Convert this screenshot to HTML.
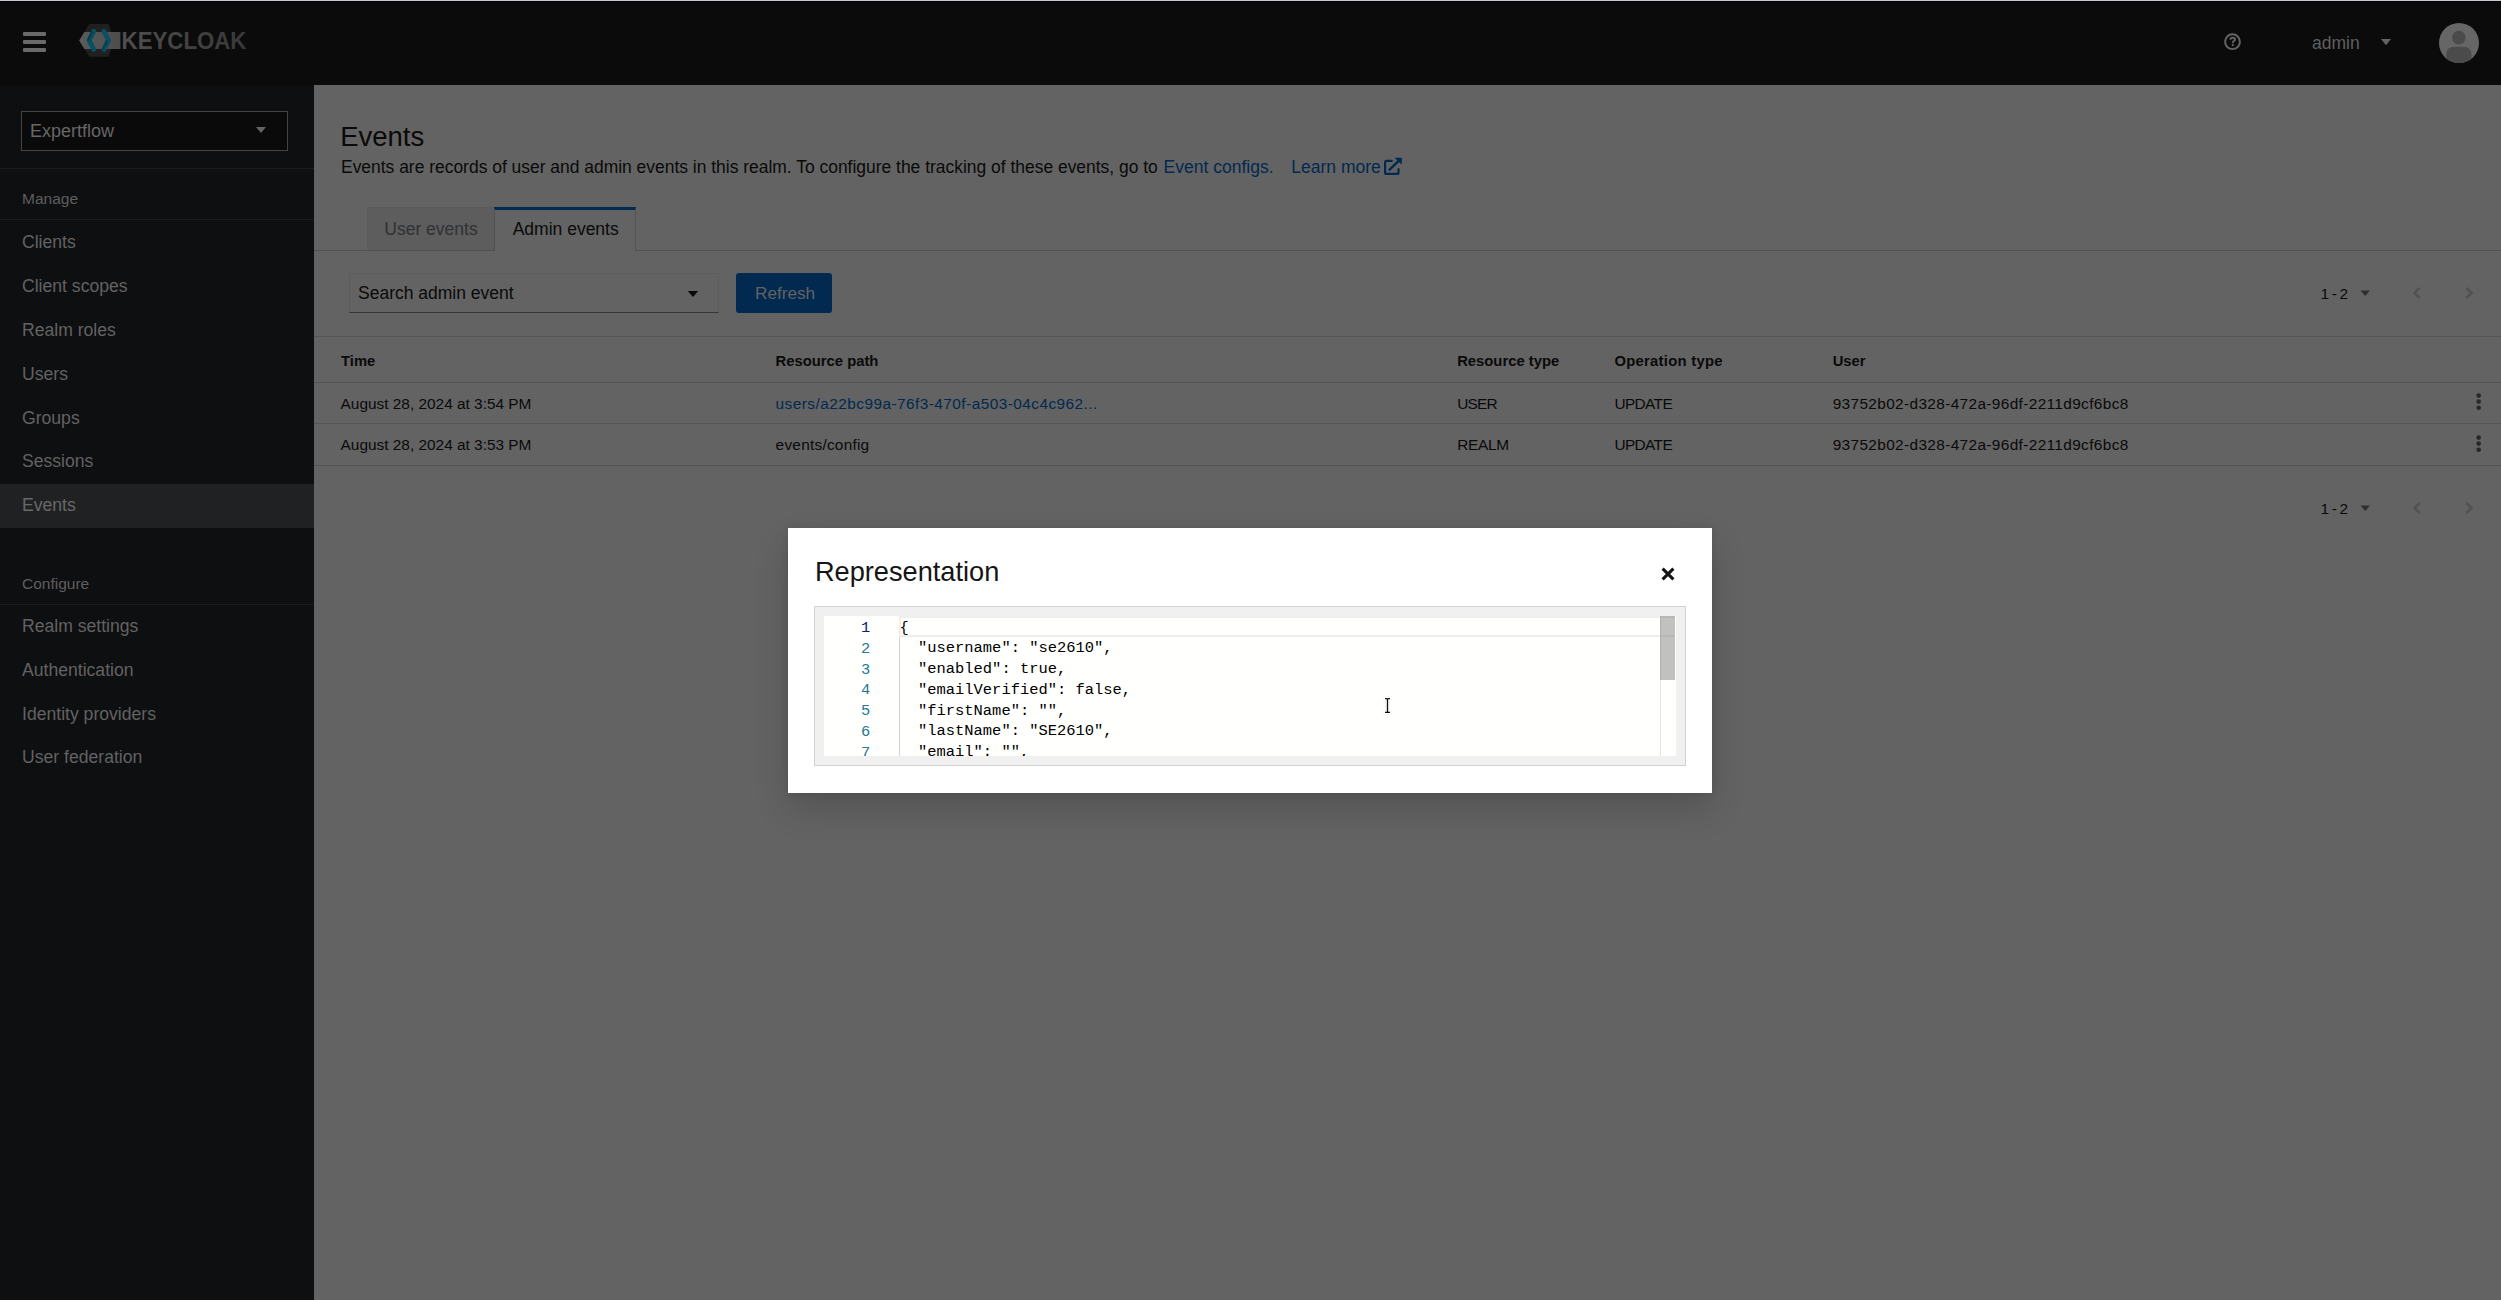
<!DOCTYPE html>
<html><head><meta charset="utf-8">
<style>
*{box-sizing:border-box;margin:0;padding:0}
html,body{width:2501px;height:1300px;overflow:hidden;background:#636363;font-family:"Liberation Sans",sans-serif;color:#0a0a0a}
.abs{position:absolute}
.t{position:absolute;white-space:nowrap;line-height:1}
#topline{left:0;top:0;width:2501px;height:1px;background:#c5cad6}
#topline2{left:0;top:1px;width:2501px;height:1px;background:#000}
#header{left:0;top:2px;width:2501px;height:83px;background:#0b0b0b}
#sidebar{left:0;top:85px;width:314px;height:1215px;background:#0e0f11}
.ham{left:23px;width:23px;height:4px;background:#6a6a6a;border-radius:1px}
.nav{left:22px;font-size:17.6px;color:#626262}
.navsec{left:22px;font-size:15.5px;color:#5e5e5e}
.sdiv{left:0;width:314px;height:1px;background:#1b1c1e}
.th{font-weight:bold;font-size:14.8px;color:#0a0a0a}
.td{font-size:15.4px;color:#0a0a0a}
.rowline{left:314px;width:2187px;height:1px;background:#555}
</style></head>
<body>
<div id="topline" class="abs"></div>
<div id="topline2" class="abs"></div>
<div id="header" class="abs"></div>
<div id="sidebar" class="abs"></div>
<!-- header content -->
<div class="abs ham" style="top:32px"></div>
<div class="abs ham" style="top:39.5px"></div>
<div class="abs ham" style="top:47.5px"></div>
<svg class="abs" style="left:0;top:0" width="260" height="85" viewBox="0 0 260 85">
  <defs>
    <linearGradient id="bg1" x1="0" x2="1" y1="0" y2="0"><stop offset="0" stop-color="#5b5b5b"/><stop offset="1" stop-color="#4d4d4d"/></linearGradient>
    <linearGradient id="kg" x1="0" x2="1" y1="0" y2="0"><stop offset="0" stop-color="#4f4f4f"/><stop offset="1" stop-color="#383838"/></linearGradient>
  </defs>
  <polygon points="89.4,24 108.7,24 113.6,40.4 108.7,56.8 89.4,56.8 79.4,40.4" fill="#202020"/>
  <polygon points="84.3,31.9 120.4,31.9 120.4,48.9 84.3,48.9 79.2,40.4" fill="url(#bg1)"/>
  <polyline points="93.8,31.4 89.2,40.4 93.8,49.4" fill="none" stroke="#0a5064" stroke-width="4.8" stroke-linecap="round" stroke-linejoin="miter"/>
  <polyline points="104,31.4 108.6,40.4 104,49.4" fill="none" stroke="#0a5064" stroke-width="4.8" stroke-linecap="round" stroke-linejoin="miter"/>
  <line x1="92.45" y1="31.2" x2="87.85" y2="40.4" stroke="#053f4d" stroke-width="2.3"/>
  <line x1="102.65" y1="49.6" x2="107.25" y2="40.4" stroke="#053f4d" stroke-width="2.3"/>
  <text x="121.6" y="49.2" font-family="Liberation Sans" font-weight="bold" font-size="24.7" textLength="124.8" lengthAdjust="spacingAndGlyphs" fill="url(#kg)">KEYCLOAK</text>
</svg>
<svg class="abs" style="left:2222px;top:32px" width="22" height="22" viewBox="0 0 22 22">
  <circle cx="10.5" cy="9.7" r="7.4" fill="none" stroke="#636363" stroke-width="2"/>
  <path d="M8.4,7.7 C8.4,6.4 9.4,5.8 10.7,5.8 C12.1,5.8 13,6.6 13,7.6 C13,8.9 11.1,9.2 10.8,10.5 L10.8,11.2" fill="none" stroke="#636363" stroke-width="1.9"/>
  <circle cx="10.8" cy="13.2" r="1.15" fill="#636363"/>
</svg>
<div class="t" style="left:2312px;top:35px;font-size:17.5px;color:#5f5f5f">admin</div>
<svg class="abs" style="left:2380px;top:38px" width="12" height="8" viewBox="0 0 12 8"><polygon points="1,1 11,1 6,7.2" fill="#636363"/></svg>
<svg class="abs" style="left:2439px;top:23.4px" width="40" height="40" viewBox="0 0 40 40">
  <defs><clipPath id="avc"><circle cx="20" cy="20" r="20"/></clipPath></defs>
  <circle cx="20" cy="20" r="20" fill="#666"/>
  <g clip-path="url(#avc)">
    <circle cx="19.8" cy="14.6" r="6.8" fill="#4b4b4b"/>
    <path d="M7.2,40 V32 C7.2,27 9.5,23.8 16,23.8 H23.6 C30,23.8 32.4,27 32.4,32 V40 Z" fill="#4b4b4b"/>
  </g>
</svg>
<!-- sidebar content -->
<div class="abs" style="left:21px;top:111px;width:267px;height:40px;background:#0a0a0a;border:1px solid #444"></div>
<div class="t" style="left:30px;top:122px;font-size:18px;color:#676767">Expertflow</div>
<svg class="abs" style="left:255px;top:126px" width="12" height="8" viewBox="0 0 12 8"><polygon points="1,1 11,1 6,7" fill="#636363"/></svg>
<div class="abs sdiv" style="top:168px"></div>
<div class="t navsec" style="top:190.5px">Manage</div>
<div class="abs sdiv" style="top:219px"></div>
<div class="t nav" style="top:234.3px">Clients</div>
<div class="t nav" style="top:278.2px">Client scopes</div>
<div class="t nav" style="top:322.1px">Realm roles</div>
<div class="t nav" style="top:366px">Users</div>
<div class="t nav" style="top:409.9px">Groups</div>
<div class="t nav" style="top:453.3px">Sessions</div>
<div class="abs" style="left:0;top:484px;width:314px;height:43.6px;background:#202123"></div>
<div class="t nav" style="top:497.4px;color:#686868">Events</div>
<div class="t navsec" style="top:575.8px">Configure</div>
<div class="abs sdiv" style="top:604px"></div>
<div class="t nav" style="top:618.4px">Realm settings</div>
<div class="t nav" style="top:662.4px">Authentication</div>
<div class="t nav" style="top:705.6px">Identity providers</div>
<div class="t nav" style="top:749.2px">User federation</div>
<!-- main content -->
<div class="t" style="left:340.2px;top:123.1px;font-size:27.5px;color:#0a0a0a">Events</div>
<div class="t" style="left:341px;top:158.5px;font-size:17.45px;color:#0a0a0a">Events are records of user and admin events in this realm. To configure the tracking of these events, go to</div>
<div class="t" style="left:1163.6px;top:158.5px;font-size:17.5px;color:#022950">Event configs.</div>
<div class="t" style="left:1291.3px;top:158.5px;font-size:17.5px;color:#022950">Learn more</div>
<svg class="abs" style="left:1383px;top:157px" width="20" height="19" viewBox="0 0 20 19">
  <path d="M8.7,3.95 H3.6 Q2.1,3.95 2.1,5.4 V15.4 Q2.1,16.9 3.6,16.9 H14 Q15.5,16.9 15.5,15.4 V12" fill="none" stroke="#022950" stroke-width="2.2" stroke-linecap="round"/>
  <path d="M6.6,12.6 L15.6,3.9" fill="none" stroke="#022950" stroke-width="2.5" stroke-linecap="round"/>
  <polygon points="12.2,1.1 18.6,1.1 18.4,7" fill="#022950" stroke="#022950" stroke-width="0.6" stroke-linejoin="round"/>
</svg>
<!-- tabs -->
<div class="abs" style="left:314px;top:250px;width:2187px;height:1px;background:#525252"></div>
<div class="abs" style="left:366.7px;top:206.8px;width:127.7px;height:43.4px;background:#5d5d5d;border-top:1px solid #5b5b5b"></div>
<div class="abs" style="left:494.4px;top:206.8px;width:141.3px;height:44.2px;background:#636363;border-left:1px solid #525252;border-right:1px solid #525252;border-top:3px solid #022950"></div>
<div class="t" style="left:384.3px;top:221.2px;font-size:17.5px;color:#303234">User events</div>
<div class="t" style="left:512.7px;top:221.2px;font-size:17.5px;color:#0a0a0a">Admin events</div>
<!-- toolbar -->
<div class="abs" style="left:349px;top:273px;width:369.6px;height:40px;border:1px solid #5d5d5d;border-bottom:1px solid #363637"></div>
<div class="t" style="left:358px;top:285.2px;font-size:17.5px;color:#0a0a0a">Search admin event</div>
<svg class="abs" style="left:687px;top:289.5px" width="13" height="8" viewBox="0 0 13 8"><polygon points="0.8,1 11.2,1 6,7" fill="#0a0a0a"/></svg>
<div class="abs" style="left:736.2px;top:273px;width:95.6px;height:40px;background:#022950;border-radius:3px"></div>
<div class="t" style="left:755px;top:285.4px;font-size:17.2px;color:#636363">Refresh</div>
<div class="t" style="left:2320.5px;top:286px;font-size:15.4px;color:#0a0a0a;letter-spacing:-0.8px">1 - 2</div>
<svg class="abs" style="left:2359px;top:289px" width="12" height="8" viewBox="0 0 12 8"><polygon points="1.5,1.5 11,1.5 6.25,7" fill="#2f2f30"/></svg>
<svg class="abs" style="left:2410px;top:285px" width="14" height="16" viewBox="0 0 14 16"><polyline points="9.5,3 4.5,8 9.5,13" fill="none" stroke="#525252" stroke-width="2.6"/></svg>
<svg class="abs" style="left:2462px;top:285px" width="14" height="16" viewBox="0 0 14 16"><polyline points="4.5,3 9.5,8 4.5,13" fill="none" stroke="#525252" stroke-width="2.6"/></svg>
<div class="abs rowline" style="top:336px"></div>
<!-- table -->
<div class="t th" style="left:341px;top:354.4px">Time</div>
<div class="t th" style="left:775.6px;top:354.4px">Resource path</div>
<div class="t th" style="left:1457.2px;top:354.4px">Resource type</div>
<div class="t th" style="left:1614.4px;top:354.4px;letter-spacing:0.28px">Operation type</div>
<div class="t th" style="left:1832.7px;top:354.4px">User</div>
<div class="abs rowline" style="top:382px"></div>
<div class="t td" style="left:340.6px;top:395.8px">August 28, 2024 at 3:54 PM</div>
<div class="t td" style="left:775.6px;top:395.8px;color:#022950;letter-spacing:0.45px">users/a22bc99a-76f3-470f-a503-04c4c962...</div>
<div class="t td" style="left:1457.2px;top:395.8px;letter-spacing:-0.8px">USER</div>
<div class="t td" style="left:1614.4px;top:395.8px;letter-spacing:-0.6px">UPDATE</div>
<div class="t td" style="left:1832.7px;top:395.8px;letter-spacing:0.36px">93752b02-d328-472a-96df-2211d9cf6bc8</div>
<svg class="abs" style="left:2474px;top:390px" width="10" height="24" viewBox="0 0 10 24"><circle cx="4.7" cy="5.6" r="2.3" fill="#27282a"/><circle cx="4.7" cy="11.6" r="2.3" fill="#27282a"/><circle cx="4.7" cy="17.7" r="2.3" fill="#27282a"/></svg>
<div class="abs rowline" style="top:423px"></div>
<div class="t td" style="left:340.6px;top:437px">August 28, 2024 at 3:53 PM</div>
<div class="t td" style="left:775.6px;top:437px;letter-spacing:0.24px">events/config</div>
<div class="t td" style="left:1457.2px;top:437px;letter-spacing:-0.3px">REALM</div>
<div class="t td" style="left:1614.4px;top:437px;letter-spacing:-0.6px">UPDATE</div>
<div class="t td" style="left:1832.7px;top:437px;letter-spacing:0.36px">93752b02-d328-472a-96df-2211d9cf6bc8</div>
<svg class="abs" style="left:2474px;top:432px" width="10" height="24" viewBox="0 0 10 24"><circle cx="4.7" cy="5.6" r="2.3" fill="#27282a"/><circle cx="4.7" cy="11.6" r="2.3" fill="#27282a"/><circle cx="4.7" cy="17.7" r="2.3" fill="#27282a"/></svg>
<div class="abs rowline" style="top:465px"></div>
<div class="t" style="left:2320.5px;top:501px;font-size:15.4px;color:#0a0a0a;letter-spacing:-0.8px">1 - 2</div>
<svg class="abs" style="left:2359px;top:504px" width="12" height="8" viewBox="0 0 12 8"><polygon points="1.5,1.5 11,1.5 6.25,7" fill="#2f2f30"/></svg>
<svg class="abs" style="left:2410px;top:500px" width="14" height="16" viewBox="0 0 14 16"><polyline points="9.5,3 4.5,8 9.5,13" fill="none" stroke="#525252" stroke-width="2.6"/></svg>
<svg class="abs" style="left:2462px;top:500px" width="14" height="16" viewBox="0 0 14 16"><polyline points="4.5,3 9.5,8 4.5,13" fill="none" stroke="#525252" stroke-width="2.6"/></svg>
<!-- modal -->
<div class="abs" style="left:788px;top:528px;width:924.3px;height:265px;background:#fff;box-shadow:0 16px 32px rgba(3,3,3,0.16),0 0 8px rgba(3,3,3,0.1)"></div>
<div class="t" style="left:814.9px;top:558.3px;font-size:27.2px;color:#151515">Representation</div>
<svg class="abs" style="left:1660px;top:566px" width="16" height="16" viewBox="0 0 16 16"><path d="M2.6,2.6 L13.4,13.4 M13.4,2.6 L2.6,13.4" stroke="#151515" stroke-width="3.1"/></svg>
<div class="abs" style="left:814px;top:606px;width:872px;height:160px;background:#f0f0f0;border:1px solid #d2d2d2"></div>
<div class="abs" style="left:823.8px;top:616px;width:852.2px;height:140px;background:#fffffe;overflow:hidden" id="ed">
  <div class="abs" style="left:75.2px;top:0;width:776px;height:21px;border:2px solid #eeeeee;border-right:none"></div>
  <div class="abs" style="left:75.2px;top:21px;width:1px;height:130px;background:#d3d3d3"></div>
  <div class="abs" style="left:0;top:2px;width:46.5px;font-family:'Liberation Mono',monospace;font-size:15.4px;line-height:20.8px;text-align:right;color:#237893">
    <div style="color:#0b216f">1</div><div>2</div><div>3</div><div>4</div><div>5</div><div>6</div><div>7</div>
  </div>
  <pre class="abs" style="left:75.7px;top:1.5px;font-family:'Liberation Mono',monospace;font-size:15.45px;line-height:20.8px;color:#000">{
  "username": "se2610",
  "enabled": true,
  "emailVerified": false,
  "firstName": "",
  "lastName": "SE2610",
  "email": "",</pre>
  <div class="abs" style="left:836.6px;top:0;width:15.6px;height:140px;border-left:1px solid #e3e3e3"></div>
  <div class="abs" style="left:836.6px;top:0;width:14.6px;height:63.7px;background:rgba(100,100,100,0.4)"></div>
</div>
<svg class="abs" style="left:1382px;top:696px" width="12" height="19" viewBox="0 0 12 19">
  <path d="M3,2.7 H4.6 Q5.5,2.7 5.5,4 V15 Q5.5,16.3 4.6,16.3 H3 M8,2.7 H6.4 Q5.5,2.7 5.5,4 V15 Q5.5,16.3 6.4,16.3 H8" fill="none" stroke="#e6e6e6" stroke-width="4.2" stroke-linecap="round" opacity="0.6"/>
  <path d="M3,2.7 H4.6 Q5.5,2.7 5.5,4 V15 Q5.5,16.3 4.6,16.3 H3 M8,2.7 H6.4 Q5.5,2.7 5.5,4 V15 Q5.5,16.3 6.4,16.3 H8" fill="none" stroke="#fff" stroke-width="3.2" stroke-linecap="round"/>
  <path d="M3,2.7 H4.6 Q5.5,2.7 5.5,4 V15 Q5.5,16.3 4.6,16.3 H3 M8,2.7 H6.4 Q5.5,2.7 5.5,4 V15 Q5.5,16.3 6.4,16.3 H8" fill="none" stroke="#111" stroke-width="1.3"/>
</svg>
</body></html>
